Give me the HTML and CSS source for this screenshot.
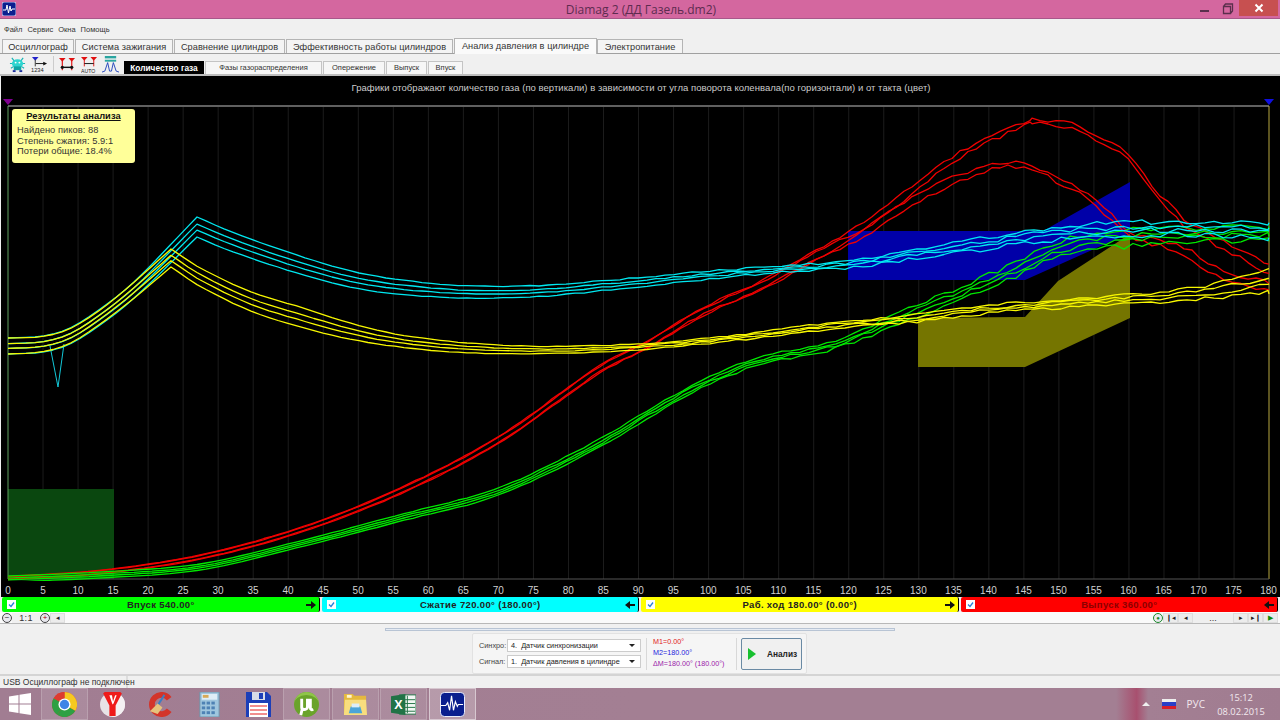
FILE: index.html
```html
<!DOCTYPE html>
<html lang="ru">
<head>
<meta charset="utf-8">
<title>Diamag 2</title>
<link rel="stylesheet" href="styles.css">
</head>
<body>
<div class="app">
  <header class="titlebar">
    <div class="title-left"><svg class="app-icon" viewBox="0 0 14 14"><rect width="14" height="14" rx="2" fill="#0a1f8f" stroke="#dfe6ff" stroke-width=".8"/><path d="M1 8h3l1-5 1.500 8 1.500-7 1 5 1-2h3" fill="none" stroke="#fff" stroke-width="1"/></svg></div>
    <span class="title-text">Diamag 2 (ДД Газель.dm2)</span>
    <div class="win-buttons">
      <span class="win-btn"><i class="min-glyph"></i></span>
      <span class="win-btn"><svg width="12" height="12" viewBox="0 0 12 12"><path d="M1.500 3.500h7v7h-7zM1.500 3.500l2-2.500h7v7l-2 2.500" fill="none" stroke="#5a2f4c" stroke-width="1.300"/></svg></span>
      <span class="win-close"><svg width="10" height="10" viewBox="0 0 10 10"><path d="M1.500 1.500l7 7M8.500 1.500l-7 7" stroke="#fff" stroke-width="2"/></svg></span>
    </div>
  </header>

  <nav class="menubar"><span>Файл</span><span>Сервис</span><span>Окна</span><span>Помощь</span></nav>

  <div class="tabs">
    <span class="tab t1">Осциллограф</span>
    <span class="tab t2">Система зажигания</span>
    <span class="tab t3">Сравнение цилиндров</span>
    <span class="tab t4">Эффективность работы цилиндров</span>
    <span class="tab tab-active t5">Анализ давления в цилиндре</span>
    <span class="tab t6">Электропитание</span>
  </div>

  <div class="toolbar">
    <div class="tools">
      <svg class="tool tool-a" viewBox="0 0 18 18"><path d="M3 2l3 4h6l3-4M1 8h3M14 8h3M2 13l3-2M16 13l-3-2" stroke="#13b5b5" stroke-width="1.200" fill="none"/><ellipse cx="9" cy="8" rx="6" ry="4.500" fill="#2fd5d0"/><rect x="5" y="11" width="8" height="4" fill="#12a5a5"/><rect x="4" y="15" width="3" height="2" fill="#1c2f9c"/><rect x="11" y="15" width="3" height="2" fill="#1c2f9c"/><circle cx="7" cy="7" r="1" fill="#fff"/><circle cx="11" cy="7" r="1" fill="#fff"/></svg>
      <svg class="tool tool-b" viewBox="0 0 18 18"><path d="M1 1h7L4.500 5z" fill="#2222cc"/><path d="M4.500 4v7" stroke="#333"/><path d="M5 8h10" stroke="#111"/><path d="M17 8l-4-2v4z" fill="#111"/><text x="0" y="17" class="tool-text">1234</text></svg>
      <i class="tool-sep"></i>
      <svg class="tool tool-c" viewBox="0 0 18 18"><path d="M0 2h7L3.500 6zM10 2h7l-3.500 4z" fill="#e01010"/><path d="M3.500 5v10M13.500 5v10" stroke="#e01010" stroke-width="1.200"/><path d="M3.500 12h10" stroke="#111" stroke-width="1.500"/><circle cx="3.500" cy="12" r="1.700" fill="#111"/><circle cx="13.500" cy="12" r="1.700" fill="#111"/></svg>
      <svg class="tool tool-d" viewBox="0 0 18 18"><path d="M0 1h7L3.500 5zM10 1h7l-3.500 4z" fill="#e01010"/><path d="M3.500 4v7M13.500 4v7" stroke="#e01010"/><path d="M3.500 8h10" stroke="#111"/><text x="0" y="17.500" class="tool-text tool-auto">AUTO</text></svg>
      <svg class="tool tool-e" viewBox="0 0 18 18"><rect x="3" y="0" width="12" height="2.500" fill="#2aa5a0"/><rect x="3" y="4" width="12" height="2" fill="#2aa5a0"/><path d="M0 17l3-1 3-9 2 9h2l2-9 3 9 3 1" fill="none" stroke="#2244bb" stroke-width="1"/></svg>
    </div>
    <div class="subtabs">
      <span class="subtab subtab-active s1">Количество газа</span>
      <span class="subtab s2">Фазы газораспределения</span>
      <span class="subtab s3">Опережение</span>
      <span class="subtab s4">Выпуск</span>
      <span class="subtab s5">Впуск</span>
    </div>
  </div>

  <section class="chart">
    <div class="chart-title">Графики отображают количество газа (по вертикали) в зависимости от угла поворота коленвала(по горизонтали) и от такта (цвет)</div>
    <div class="plot">
      <svg id="plot" class="plot-svg" viewBox="0 98 1280 482" width="1280" height="482">
        <g id="grid"></g>
        <rect x="8" y="488" width="106" height="90" fill="#0a470f"/>
        <polygon points="848,230 1043,230 1130,181 1130,232 1025,279 848,279" fill="#0000a8"/>
        <polygon points="918,317 1025,316 1058,280 1130,233 1130,317 1025,366 918,366" fill="#757500"/>
        <path d="M8 105H1269" stroke="#808080" stroke-width="1.500"/>
        <path d="M8 105V578" stroke="#5f9f5f"/>
        <path d="M1269 105V578" stroke="#b8a840"/>
        <path d="M8 578H1269" stroke="#555"/>
        <polygon points="3,98 13,98 8,104" fill="#800090"/>
        <polygon points="1264,98 1274,98 1269,104" fill="#1010e0"/>
        <g id="curves" fill="none" stroke-width="1.300" stroke-linejoin="round"></g>
      </svg>
      <aside class="results">
        <h2>Результаты анализа</h2>
        <p>Найдено пиков: 88</p>
        <p>Степень сжатия: 5.9:1</p>
        <p>Потери общие: 18.4%</p>
      </aside>
    </div>
    <div class="axis"><span>0</span><span>5</span><span>10</span><span>15</span><span>20</span><span>25</span><span>30</span><span>35</span><span>40</span><span>45</span><span>50</span><span>55</span><span>60</span><span>65</span><span>70</span><span>75</span><span>80</span><span>85</span><span>90</span><span>95</span><span>100</span><span>105</span><span>110</span><span>115</span><span>120</span><span>125</span><span>130</span><span>135</span><span>140</span><span>145</span><span>150</span><span>155</span><span>160</span><span>165</span><span>170</span><span>175</span><span>180</span></div>
  </section>

  <div class="phases">
    <div class="phase ph-green"><svg class="check" viewBox="0 0 9 9"><rect width="9" height="9" fill="#fff"/><path d="M2 4.500l2 2 3-4" fill="none" stroke="#2a80d8" stroke-width="1.300"/></svg><b>Впуск 540.00°</b><svg class="arrow" viewBox="0 0 10 8"><path d="M0 3h5V0l5 4-5 4V5H0z" fill="#111"/></svg></div>
    <div class="phase ph-cyan"><svg class="check" viewBox="0 0 9 9"><rect width="9" height="9" fill="#fff"/><path d="M2 4.500l2 2 3-4" fill="none" stroke="#2a80d8" stroke-width="1.300"/></svg><b>Сжатие 720.00° (180.00°)</b><svg class="arrow" viewBox="0 0 10 8"><path d="M10 3H5V0L0 4l5 4V5h5z" fill="#111"/></svg></div>
    <div class="phase ph-yellow"><svg class="check" viewBox="0 0 9 9"><rect width="9" height="9" fill="#fff"/><path d="M2 4.500l2 2 3-4" fill="none" stroke="#2a80d8" stroke-width="1.300"/></svg><b>Раб. ход 180.00° (0.00°)</b><svg class="arrow" viewBox="0 0 10 8"><path d="M0 3h5V0l5 4-5 4V5H0z" fill="#111"/></svg></div>
    <div class="phase ph-red"><svg class="check" viewBox="0 0 9 9"><rect width="9" height="9" fill="#fff"/><path d="M2 4.500l2 2 3-4" fill="none" stroke="#2a80d8" stroke-width="1.300"/></svg><b>Выпуск 360.00°</b><svg class="arrow" viewBox="0 0 10 8"><path d="M10 3H5V0L0 4l5 4V5h5z" fill="#111"/></svg></div>
  </div>

  <div class="scrollrow">
    <span class="zoom-btn">−</span><span class="ratio">1:1</span><span class="zoom-btn zoom-plus">+</span><span class="nav-btn">◂</span>
    <span class="scroll-fill"></span>
    <span class="zoom-btn zoom-green">●</span><span class="nav-btn">❙◂</span><span class="nav-btn">◂</span><span class="dots">...</span><span class="nav-btn">▸</span><span class="nav-btn">▸❙</span><span class="nav-btn nav-play">▶</span>
  </div>

  <section class="lower">
    <div class="splitter"></div>
    <div class="control-box">
      <div class="combos">
        <label class="combo-row"><span>Синхро:</span><span class="combo">4.&nbsp; Датчик синхронизации<i></i></span></label>
        <label class="combo-row"><span>Сигнал:</span><span class="combo">1.&nbsp; Датчик давления в цилиндре<i></i></span></label>
      </div>
      <div class="measures">
        <span class="m1">M1=0.00°</span>
        <span class="m2">M2=180.00°</span>
        <span class="m3">ΔM=180.00° (180.00°)</span>
      </div>
      <button class="run"><i class="run-arrow"></i><span>Анализ</span></button>
    </div>
  </section>

  <footer class="statusbar"><span class="status-cell">USB Осциллограф не подключен</span></footer>

  <div class="taskbar">
    <span class="start"><svg width="22" height="22" viewBox="0 0 22 22"><path d="M0 3.500l9.500-1.500v8.500H0zM10.500 1.800L22 0v10.500H10.500zM0 11.500h9.500V20L0 18.500zM10.500 11.500H22V22l-11.500-1.800z" fill="#fff"/></svg></span>
    <span class="task task-on"><svg viewBox="0 0 24 24"><circle cx="12" cy="12" r="12" fill="#dd3b2f"/><path d="M12 12L22.400 18A12 12 0 0 1 5 21.800z" fill="#2ea043"/><path d="M12 12l-7 9.800A12 12 0 0 1 1.600 6z" fill="#2ea043"/><path d="M12 12L12 0A12 12 0 0 1 22.400 18z" fill="#f6c920"/><path d="M12 0A12 12 0 0 0 1.600 6L12 12z" fill="#dd3b2f"/><circle cx="12" cy="12" r="5.800" fill="#fff"/><circle cx="12" cy="12" r="4.500" fill="#3f84e6"/></svg></span>
    <span class="task"><svg viewBox="0 0 24 24"><circle cx="12" cy="12" r="12" fill="#e8e2e6"/><path d="M12 0A12 12 0 0 1 24 12 12 12 0 0 1 12 24z" fill="#f4f0f2"/><path d="M3 1.500A12 12 0 0 1 21 1.500L15 13v10h-6V13z" fill="#ef1a1a"/><path d="M9 3h2.500l1 6 2-6H16l-3 8-1 1z" fill="#fff"/></svg></span>
    <span class="task"><svg viewBox="0 0 26 26"><path d="M21 7A10 10 0 1 0 21 19" fill="none" stroke="#d3342a" stroke-width="6"/><path d="M16 3l-7 11" stroke="#3c7ec2" stroke-width="2"/><path d="M9 12l5 4-5 7-8-3z" fill="#e6c27c"/></svg></span>
    <span class="task"><svg viewBox="0 0 22 26"><rect x="1" y="0" width="20" height="26" fill="#9fc6de" stroke="#6f93a9"/><rect x="3" y="2" width="16" height="6" fill="#dfeef7"/><rect x="4" y="3" width="6" height="3" fill="#d6a957"/><g fill="#4e82b4"><rect x="3" y="10" width="3.500" height="3"/><rect x="8" y="10" width="3.500" height="3"/><rect x="13" y="10" width="3.500" height="3"/><rect x="3" y="15" width="3.500" height="3"/><rect x="8" y="15" width="3.500" height="3"/><rect x="13" y="15" width="3.500" height="3"/><rect x="3" y="20" width="3.500" height="3"/><rect x="8" y="20" width="3.500" height="3"/><rect x="13" y="20" width="3.500" height="3"/></g></svg></span>
    <span class="task"><svg viewBox="0 0 25 25"><path d="M0 0h21l4 4v21H0z" fill="#1c3fb8"/><rect x="6" y="0" width="13" height="8" fill="#d8dde8"/><rect x="13" y="1" width="4" height="6" fill="#1c3fb8"/><rect x="3" y="11" width="19" height="14" fill="#fff"/><path d="M4 14h17M4 18h17M4 22h17" stroke="#ee6a6a" stroke-width="1.500"/></svg></span>
    <span class="task task-on"><svg viewBox="0 0 26 26"><circle cx="13" cy="13" r="13" fill="#6aa32b"/><path d="M0 13A13 13 0 0 1 26 13A13 10 0 0 0 0 13z" fill="#8fc54a"/><path d="M8 7v9c0 3 5 3 6 0V7M17 7v9c0 2 1 3 3 2M9 16l-2 8" fill="none" stroke="#fff" stroke-width="3"/></svg></span>
    <span class="task task-on"><svg viewBox="0 0 26 24"><path d="M1 1h9l2 2h12v20H1z" fill="#e5b93f"/><path d="M2 7h22l1 16H1z" fill="#f8dd7e"/><rect x="4" y="2" width="5" height="3" fill="#fff6d0"/><path d="M8 14h10l2 7H6z" fill="#4ca5d8"/><rect x="9" y="11" width="8" height="4" fill="#ddeef8"/></svg></span>
    <span class="task task-on"><svg viewBox="0 0 26 22"><rect x="9" y="1" width="17" height="20" fill="#f3f7f4" stroke="#217346"/><path d="M17 2v18M10 6h15M10 10h15M10 14h15M10 18h15" stroke="#217346"/><path d="M0 2.500L15 0v22L0 19.500z" fill="#217346"/><text x="3.500" y="16" class="xl-text">X</text></svg></span>
    <span class="task task-active"><svg viewBox="0 0 26 26"><rect x=".5" y=".5" width="25" height="25" rx="4" fill="#0a1e8e" stroke="#f0f2ff"/><path d="M1 14h5l2-3 2 8 2-15 2 15 2-9 2 5 1-2h5" fill="none" stroke="#fff" stroke-width="1.200"/></svg></span>
    <span class="task-spacer"></span>
    <span class="tray-up"></span>
    <span class="flag"><i></i><i></i><i></i></span>
    <span class="lang">РУС</span>
    <span class="clock"><span>15:12</span><span>08.02.2015</span></span>
  </div>
</div>
<script src="app.js"></script>
</body>
</html>
```
FILE: styles.css
```css
* { box-sizing: border-box; }
html, body { margin: 0; padding: 0; overflow: hidden; }
body { width: 1280px; height: 720px; font-family: "Liberation Sans", Arial, sans-serif; background: #f0f0f0; }
.app { display: flex; flex-direction: column; width: 1280px; height: 720px; }

.titlebar { flex: 0 0 19px; height: 19px; display: grid; grid-template-columns: 1fr auto 1fr; align-items: center; background: #d4679f; border-bottom: 1px solid #a8578a; padding-left: 2px; }
.title-left { display: flex; }
.app-icon { width: 14px; height: 14px; }
.title-text { font: 12px "Open Sans", sans-serif; color: #5d2c50; }
.win-buttons { display: flex; align-items: center; height: 18px; margin-right: 2px; justify-content: flex-end; }
.win-btn { width: 23px; height: 18px; display: flex; align-items: center; justify-content: center; }
.min-glyph { width: 9px; height: 2px; background: #5a2f4c; margin-top: 4px; }
.win-close { width: 39px; height: 16px; background: #c75050; display: flex; align-items: center; justify-content: center; margin-top: -2px; }

.menubar { flex: 0 0 19px; display: flex; align-items: center; gap: 5px; padding: 2px 0 0 4px; font-size: 7.500px; color: #333; background: #f0f0f0; }

.tabs { flex: 0 0 15px; display: flex; align-items: flex-end; padding-left: 2px; gap: 1px; background: #f0f0f0; border-bottom: 1px solid #a0a0a0; font-size: 9.200px; letter-spacing: .05px; color: #333; }
.tab { height: 14px; display: flex; align-items: center; justify-content: center; background: #f4f4f4; border: 1px solid #b4b4b4; border-bottom: 0; white-space: nowrap; }
.tab-active { height: 16px; background: #fafafa; margin-bottom: -1px; padding-bottom: 1px; position: relative; }
.t1 { width: 72px; } .t2 { width: 98px; } .t3 { width: 111px; } .t4 { width: 167px; } .t5 { width: 143px; margin-right: -1px; } .t6 { width: 86px; }

.toolbar { flex: 0 0 22px; display: flex; align-items: flex-end; background: #f0f0f0; border-bottom: 2px solid #bdbdbd; }
.tools { width: 124px; height: 20px; display: flex; align-items: center; padding-left: 9px; align-self: center; }
.tool { width: 17px; height: 17px; flex: none; }
.tool-b { margin-left: 5px; }
.tool-sep { width: 1px; height: 16px; background: #ccc; margin: 0 5px; }
.tool-d { margin-left: 5px; }
.tool-e { margin-left: 4px; }
.tool-text { font: 6px "Liberation Sans", sans-serif; fill: #222; }
.tool-auto { font-size: 5.500px; }
.subtabs { display: flex; gap: 1px; align-items: flex-end; font-size: 7.500px; color: #333; }
.subtab { height: 13px; padding-bottom: 1px; display: flex; align-items: center; justify-content: center; background: #f6f6f6; border: 1px solid #c4c4c4; border-bottom: 0; white-space: nowrap; }
.subtab-active { background: #000; border-color: #000; color: #fff; font-weight: 700; font-size: 8.300px; }
.s1 { width: 80px; } .s2 { width: 117px; } .s3 { width: 62px; } .s4 { width: 41px; } .s5 { width: 35px; }

.chart { flex: 0 0 521px; background: #000; display: flex; flex-direction: column; margin-left: 1px; }
.chart-title { height: 23px; flex: none; text-align: center; color: #ccc; font-size: 9.500px; letter-spacing: .03px; padding-top: 6px; line-height: 11px; margin-left: 1px; }
.plot { position: relative; height: 482px; flex: none; margin-left: -1px; }
.plot-svg { display: block; }
.results { position: absolute; left: 12px; top: 10px; width: 123px; height: 54px; background: #ffff99; border-radius: 3px; padding: 2px 5px; font-size: 9.300px; letter-spacing: .05px; color: #333; }
.results h2 { margin: 0 0 3px; font-size: 9.300px; line-height: 11px; text-align: center; font-weight: 700; color: #111; text-decoration: underline; }
.results p { margin: 0; line-height: 10.700px; }
.axis { flex: 1; display: flex; margin-left: -10.500px; padding-top: 4px; color: #d0d0d0; font-size: 10px; line-height: 12px; }
.axis span { flex: 0 0 35.030px; text-align: center; }

.phases { flex: 0 0 15px; display: flex; gap: 2px; padding: 0 2px; background: #f0f0f0; }
.phase { flex: 1; display: flex; align-items: center; height: 15px; border-radius: 2px; font-size: 9.500px; letter-spacing: .35px; color: #222; border-right: 1px solid #000; }
.phase b { flex: 1; text-align: center; }
.arrow { width: 10px; height: 8px; margin-right: 3px; flex: none; }
.check { width: 9px; height: 9px; margin-left: 5px; flex: none; }
.ph-green { background: #00ff00; } .ph-cyan { background: #00ffff; } .ph-yellow { background: #ffff00; } .ph-red { background: #ff0000; }
.ph-red b { color: #8c0000; }

.scrollrow { flex: 0 0 12px; display: flex; align-items: center; background: #fafafa; border-bottom: 1px solid #b8b8b8; padding: 0 2px; font-size: 9px; color: #333; }
.zoom-btn { width: 10px; height: 10px; flex: none; border: 1px solid #444; border-radius: 50%; display: flex; align-items: center; justify-content: center; font-size: 8px; line-height: 8px; background: #e8e8ee; }
.zoom-plus { color: #a00; }
.zoom-green { color: #1a8a2a; font-size: 6px; border-color: #1a8a2a; }
.ratio { width: 28px; text-align: center; background: #f0f0f0; letter-spacing: .4px; }
.nav-btn { width: 15px; flex: none; height: 10px; display: flex; align-items: center; justify-content: center; background: #ececec; border: 1px solid #ddd; font-size: 7px; color: #222; }
.nav-play { color: #0a8a0a; }
.scroll-fill { flex: 1; }
.dots { width: 40px; text-align: center; background: #efefef; }

.lower { flex: 1; display: flex; flex-direction: column; align-items: center; background: #f0f0f0; border-bottom: 2px solid #d4d4d4; padding-top: 4px; }
.splitter { width: 510px; height: 3px; background: #e6ecf4; border: 1px solid #b8c4d4; flex: none; }
.control-box { margin-top: 2px; width: 335px; height: 41px; display: flex; align-items: center; background: #f5f5f5; border: 1px solid #e2e2e2; border-radius: 2px; font-size: 7.300px; margin-left: -1px; }
.combos { display: flex; flex-direction: column; gap: 3px; margin-left: 6px; color: #444; margin-top: -1px; }
.combo-row { display: flex; align-items: center; gap: 3px; }
.combo-row > span:first-child { width: 25px; }
.combo { width: 134px; height: 13px; display: flex; align-items: center; background: #fff; border: 1px solid #ccc; padding-left: 3px; color: #222; position: relative; }
.combo i { position: absolute; right: 5px; top: 4px; border: 3px solid transparent; border-top: 3px solid #222; }
.measures { display: flex; flex-direction: column; gap: 2px; margin-left: 5px; padding-left: 6px; border-left: 1px solid #d8d8d8; border-right: 1px solid #d8d8d8; height: 32px; width: 91px; flex: none; font-size: 7.200px; line-height: 9px; white-space: nowrap; justify-content: center; padding-bottom: 2px; }
.m1 { color: #e02020; } .m2 { color: #2222dd; } .m3 { color: #9a22aa; }
.run { width: 61px; height: 32px; display: flex; align-items: center; gap: 11px; padding: 0 0 0 6px; background: #f0f0f0; border: 1px solid #6a8aa4; border-radius: 2px; font: 700 8.300px "Liberation Sans", sans-serif; color: #222; margin-left: 4px; }
.run-arrow { border-left: 8px solid #18c030; border-top: 6px solid transparent; border-bottom: 6px solid transparent; }

.statusbar { flex: 0 0 12px; background: #f0f0f0; font-size: 8.500px; color: #333; display: flex; line-height: 12px; }
.status-cell { width: 128px; padding-left: 3px; border-right: 2px solid #ddd; white-space: nowrap; }

.taskbar { flex: 0 0 32px; display: flex; align-items: center; background: linear-gradient(90deg, #a17d92 0%, #a37f93 50%, #a37f93 87.200%, #a8506f 88.800%, #a37f93 89.700%, #a07c90 100%); padding-left: 9px; color: #f2e8ee; }
.start { width: 32px; flex: none; display: flex; justify-content: flex-start; }
.task { width: 46.800px; height: 32px; margin-right: 1.700px; display: flex; align-items: center; justify-content: center; flex: none; }
.task svg { width: 25px; height: 25px; }
.task-on { background: rgba(255,255,255,.10); border: 1px solid rgba(255,255,255,.18); }
.task-active { background: rgba(255,255,255,.22); border: 1px solid rgba(255,255,255,.45); }
.xl-text { font: 700 13px "Liberation Sans", sans-serif; fill: #fff; }
.task-spacer { flex: 1; }
.tray-up { border: 4px solid transparent; border-bottom: 4px solid #f0f0f0; border-top: 0; margin-right: 12px; }
.flag { width: 14px; height: 10px; display: flex; flex-direction: column; margin-right: 11px; }
.flag i { flex: 1; }
.flag i:nth-child(1) { background: #eee; } .flag i:nth-child(2) { background: #2a3fc8; } .flag i:nth-child(3) { background: #d8202a; }
.lang { font: 10px "Open Sans", sans-serif; margin-right: 11px; }
.clock { display: flex; flex-direction: column; align-items: center; width: 50px; margin-right: 14px; font: 9.300px/14px "Open Sans", sans-serif; padding-top: 1px; }
```
FILE: app.js
```js
(function () {
  var NS = 'http://www.w3.org/2000/svg';
  var grid = document.getElementById('grid');
  var curves = document.getElementById('curves');
  var seed = 20150208;
  function rnd() { seed = (seed * 1664525 + 1013904223) >>> 0; return seed / 4294967296; }

  for (var d = 5; d < 180; d += 5) {
    var l = document.createElementNS(NS, 'line');
    var gx = 8 + d * 7.006;
    l.setAttribute('x1', gx); l.setAttribute('x2', gx);
    l.setAttribute('y1', 106); l.setAttribute('y2', 578);
    l.setAttribute('stroke', '#1c1c1c');
    grid.appendChild(l);
  }

  function lerp(keys, x) {
    if (x <= keys[0][0]) return keys[0][1];
    for (var i = 1; i < keys.length; i++) {
      if (x <= keys[i][0]) {
        var a = keys[i - 1], b = keys[i];
        return a[1] + (b[1] - a[1]) * (x - a[0]) / (b[0] - a[0]);
      }
    }
    return keys[keys.length - 1][1];
  }

  // Catmull-Rom through the keys of one piece, so curves are smooth between kinks
  function smooth(keys, x) {
    var n = keys.length;
    for (var i = 1; i < n; i++) {
      if (x <= keys[i][0]) {
        var p1 = keys[i - 1], p2 = keys[i];
        var p0 = keys[Math.max(i - 2, 0)], p3 = keys[Math.min(i + 1, n - 1)];
        var h = p2[0] - p1[0], t = (x - p1[0]) / h;
        var m1 = (p2[1] - p0[1]) / (p2[0] - p0[0]) * h;
        var m2 = (p3[1] - p1[1]) / (p3[0] - p1[0]) * h;
        var t2 = t * t, t3 = t2 * t;
        return (2 * t3 - 3 * t2 + 1) * p1[1] + (t3 - 2 * t2 + t) * m1 + (-2 * t3 + 3 * t2) * p2[1] + (t3 - t2) * m2;
      }
    }
    return keys[n - 1][1];
  }

  function value(pieces, x) {
    for (var i = 0; i < pieces.length; i++) {
      var k = pieces[i];
      if (x <= k[k.length - 1][0]) return smooth(k, x);
    }
    var last = pieces[pieces.length - 1];
    return last[last.length - 1][1];
  }

  function draw(color, pieces, frac, spread, noiseKeys, step, shift) {
    var xs = [], pts = [], i, x;
    for (x = 8; x < 1269; x += step) xs.push(x);
    xs.push(1269);
    pieces.forEach(function (k) { xs.push(k[k.length - 1][0]); });
    xs.sort(function (a, b) { return a - b; });
    for (i = 0; i < xs.length; i++) {
      x = xs[i];
      if (i && x === xs[i - 1]) continue;
      var y = value(pieces, x) + frac * lerp(spread, x) + (rnd() - 0.5) * 2 * lerp(noiseKeys, x);
      pts.push(x.toFixed(1) + ',' + y.toFixed(1));
    }
    var p = document.createElementNS(NS, 'polyline');
    p.setAttribute('points', pts.join(' '));
    p.setAttribute('stroke', color);
    curves.appendChild(p);
  }

  var fracs = [-1, -0.3, 0.3, 1];
  var noiseA = [[8, 0], [300, 0.15], [500, 0.4], [700, 0.9], [850, 1.6], [1000, 2.4], [1269, 2.8]];

  // red
  var common = [[8, 577], [100, 571], [200, 556], [300, 529], [400, 490], [500, 438], [600, 368], [650, 342], [700, 312], [760, 285], [830, 247]];
  var redUp = [common.concat([[863, 226], [903, 197], [940, 168], [980, 143], [1030, 121]]), [[1030, 121], [1066, 124], [1100, 139], [1130, 157], [1150, 185], [1180, 218], [1200, 232], [1250, 258], [1269, 270]]];
  var redLow = [common.concat([[863, 232], [903, 205], [940, 185], [963, 175], [1003, 163], [1030, 166], [1060, 180], [1090, 197], [1110, 215], [1130, 233], [1180, 247], [1220, 272], [1269, 285]])];
  var spreadR = [[8, 1.5], [300, 2.5], [500, 3.5], [700, 4], [830, 5], [950, 4], [1030, 2], [1269, 5]];
  var noiseR = [[8, 0], [500, 0.4], [800, 1.2], [950, 1.8], [1269, 2.6]];
  draw('#f00000', redUp, -1, spreadR, noiseR, 8);
  draw('#f00000', redUp, 0.7, spreadR, noiseR, 8);
  draw('#f00000', redLow, -0.7, spreadR, noiseR, 8);
  draw('#f00000', redLow, 1, spreadR, noiseR, 8);

  // green
  var green = [[[8, 578], [100, 574], [200, 566], [300, 543], [400, 517], [500, 490], [600, 442], [650, 412], [700, 384], [760, 360], [830, 345], [910, 313], [997, 277], [1063, 247], [1130, 237], [1197, 234], [1269, 232]]];
  var spreadG = [[8, 3], [300, 3], [600, 4], [800, 3.5], [1000, 7], [1130, 8], [1269, 6]];
  fracs.forEach(function (f) { draw('#00e800', green, f, spreadG, noiseA, 9); });

  // cyan
  var rise = [[8, 345], [43, 343], [70, 335], [100, 316], [133, 290]];
  var cyan = [rise.concat([[197, 226]]), [[197, 226], [230, 240], [300, 264], [360, 280], [420, 288], [470, 291], [540, 290], [600, 285], [700, 275], [780, 268], [850, 263], [920, 252], [1000, 240], [1060, 232], [1130, 228], [1200, 227], [1269, 230]]];
  var spreadC = [[8, 8], [133, 8], [197, 10], [300, 9], [470, 6], [600, 5], [800, 3], [1000, 6], [1269, 7]];
  fracs.forEach(function (f) { draw('#00e8f0', cyan, f, spreadC, noiseA, 9); });
  var spike = document.createElementNS(NS, 'polyline');
  spike.setAttribute('points', '50,345 58,386 64,343');
  spike.setAttribute('stroke', '#12c8d8');
  spike.setAttribute('stroke-width', '1');
  curves.appendChild(spike);

  // yellow
  var yellow = [rise.concat([[171, 257]]), [[171, 257], [200, 276], [250, 300], [300, 316], [350, 330], [400, 340], [470, 347], [550, 349], [650, 345], [750, 335], [830, 325], [910, 318], [1000, 307], [1100, 300], [1130, 298], [1200, 292], [1269, 280]]];
  var spreadY = [[8, 8], [100, 7], [171, 9], [300, 10], [400, 6], [550, 3.5], [700, 2.5], [850, 3], [1000, 4], [1130, 4], [1200, 6], [1269, 11]];
  var noiseY = [[8, 0], [500, 0.3], [800, 1.1], [1269, 2.0]];
  fracs.forEach(function (f) { draw('#f8f800', yellow, f, spreadY, noiseY, 9); });
})();
```
